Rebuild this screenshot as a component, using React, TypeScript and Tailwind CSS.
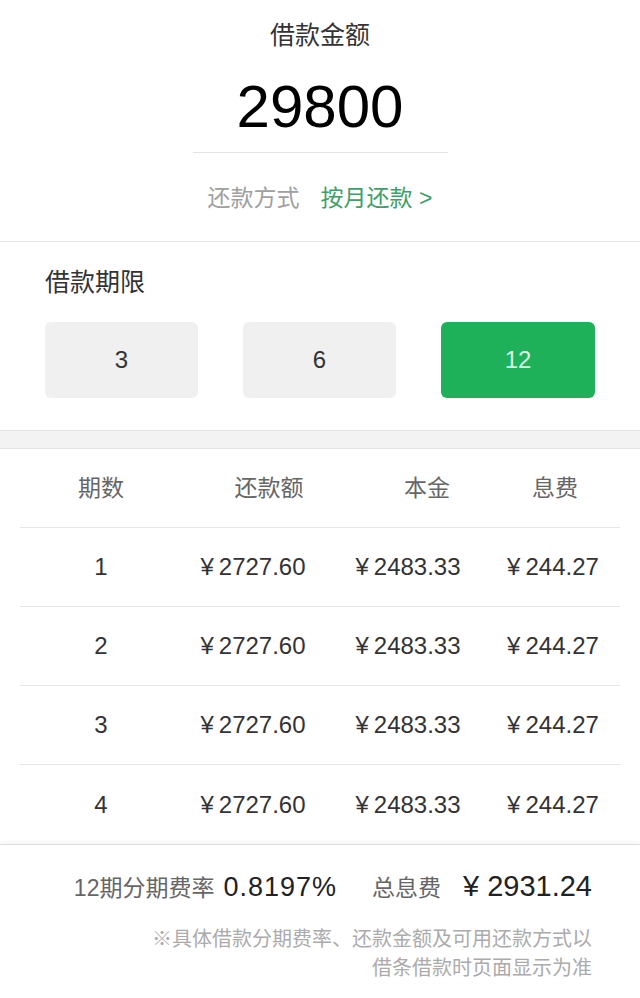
const rows = [1, 2, 3, 4].map((n) => ({
  n,
  amount: "2727.60",
  principal: "2483.33",
  fee: "244.27",
}));

const terms = [
  { value: "3", active: false },
  { value: "6", active: false },
  { value: "12", active: true },
];

function Money({ v }: { v: string }) {
  return (
    <span className="text-center">
      <span className="mr-[5px]">¥</span>
      {v}
    </span>
  );
}

export default function App() {
  return (
    <div className="w-[640px] h-[998px] overflow-hidden bg-white font-['Liberation_Sans','Noto_Sans_CJK_SC',sans-serif] text-[#333]">
      {/* amount */}
      <section className="pt-[20px] pb-[28px] border-b border-[#e6e6e6] flex flex-col items-center">
        <p className="text-[25px] leading-[30px] text-[#333]">借款金额</p>
        <p className="mt-[22px] text-[60px] leading-[70px] text-black">29800</p>
        <div className="mt-[10px] w-[255px] h-px bg-[#e3e3e3]" />
        <p className="mt-[30px] text-[23px] leading-[30px]">
          <span className="text-[#a0a0a0]">还款方式</span>
          <span className="ml-[21px] text-[#3f9f68]">按月还款 &gt;</span>
        </p>
      </section>

      {/* term */}
      <section className="px-[45px] pt-[25px] pb-[32px]">
        <p className="text-[25px] leading-[30px] text-[#333]">借款期限</p>
        <div className="mt-[25px] grid grid-cols-[153px_153px_154px] justify-between">
          {terms.map((t) => (
            <div
              key={t.value}
              className={
                t.active
                  ? "h-[76px] rounded-[6px] bg-[#1fb15a] flex items-center justify-center text-[24px] text-[#dcf5e6]"
                  : "h-[76px] rounded-[6px] bg-[#f0f0f0] flex items-center justify-center text-[24px] text-[#333]"
              }
            >
              {t.value}
            </div>
          ))}
        </div>
      </section>

      <div className="h-[19px] bg-[#f3f3f3] border-y border-[#e4e4e4]" />

      {/* table */}
      <section className="mx-[20px]">
        <div className="h-[79px] grid grid-cols-[162px_174px_142px_114px] items-center border-b border-[#e6e6e6] text-[23px] text-[#666]">
          <span className="text-center">期数</span>
          <span className="text-center">还款额</span>
          <span className="text-center">本金</span>
          <span className="text-center">息费</span>
        </div>
        {rows.map((r, i) => (
          <div
            key={r.n}
            className={
              i < rows.length - 1
                ? "h-[79px] grid grid-cols-[162px_142px_168px_122px] items-center border-b border-[#e6e6e6] text-[24px] text-[#333]"
                : "h-[79px] grid grid-cols-[162px_142px_168px_122px] items-center text-[24px] text-[#333]"
            }
          >
            <span className="text-center">{r.n}</span>
            <Money v={r.amount} />
            <Money v={r.principal} />
            <Money v={r.fee} />
          </div>
        ))}
      </section>

      {/* footer */}
      <footer className="border-t border-[#e0e0e0] shadow-[0_-2px_4px_rgba(0,0,0,0.05)] pt-[23px] pr-[48px] flex flex-col items-end">
        <div className="flex items-baseline leading-[36px]">
          <span className="text-[23px] text-[#666]">12期分期费率</span>
          <span className="ml-[9px] text-[27px] tracking-[1px] text-[#222]">0.8197%</span>
          <span className="ml-[35px] text-[23px] text-[#666]">总息费</span>
          <span className="ml-[22px] text-[29px] text-[#222]">
            <span className="mr-[8px]">¥</span>2931.24
          </span>
        </div>
        <div className="mt-[19px] text-right text-[20px] leading-[29px] text-[#ababab]">
          <p>※具体借款分期费率、还款金额及可用还款方式以</p>
          <p>借条借款时页面显示为准</p>
        </div>
      </footer>
    </div>
  );
}
